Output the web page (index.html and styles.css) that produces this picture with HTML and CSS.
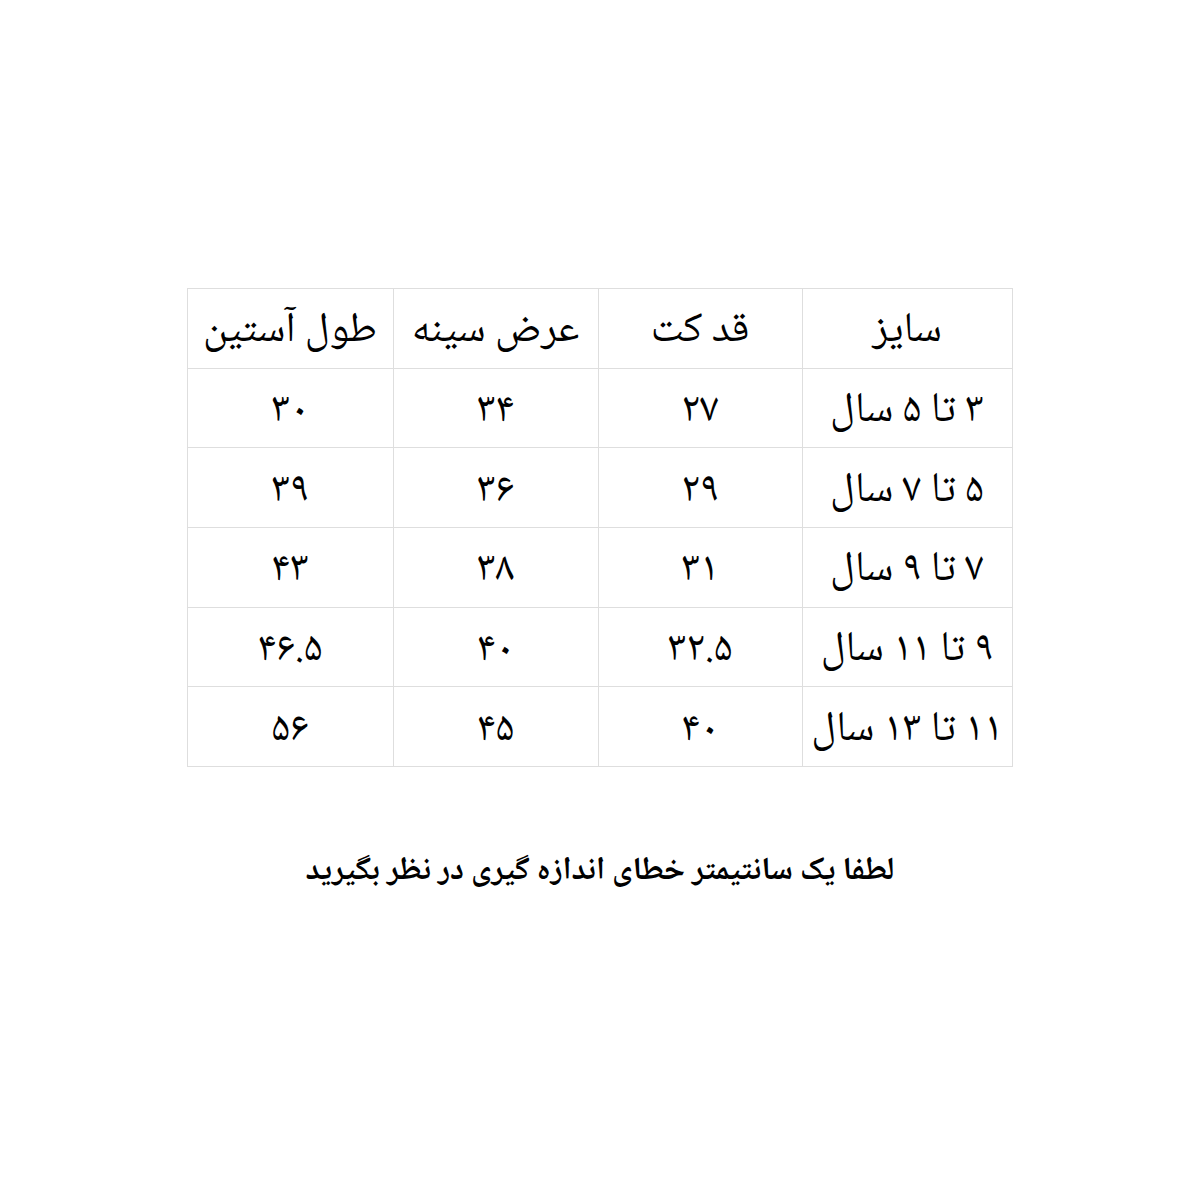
FILE: index.html
```html
<!DOCTYPE html>
<html lang="fa" dir="rtl">
<head>
<meta charset="utf-8">
<title>جدول سایز</title>
<link rel="stylesheet" href="styles.css">
</head>
<body>
<main class="page">
  <table class="sizes">
    <colgroup>
      <col class="col-size">
      <col class="col-len">
      <col class="col-chest">
      <col class="col-sleeve">
    </colgroup>
    <tr><td>سایز</td><td>قد کت</td><td>عرض سینه</td><td>طول آستین</td></tr>
    <tr><td>۳ تا ۵ سال</td><td>۲۷</td><td>۳۴</td><td>۳۰</td></tr>
    <tr><td>۵ تا ۷ سال</td><td>۲۹</td><td>۳۶</td><td>۳۹</td></tr>
    <tr><td>۷ تا ۹ سال</td><td>۳۱</td><td>۳۸</td><td>۴۳</td></tr>
    <tr><td>۹ تا ۱۱ سال</td><td>۳۲.۵</td><td>۴۰</td><td>۴۶.۵</td></tr>
    <tr><td>۱۱ تا ۱۳ سال</td><td>۴۰</td><td>۴۵</td><td>۵۶</td></tr>
  </table>
  <p class="note">لطفا یک سانتیمتر خطای اندازه گیری در نظر بگیرید</p>
</main>
</body>
</html>
```
FILE: styles.css
```css
html, body {
  margin: 0;
  padding: 0;
  background: #ffffff;
}
.page {
  width: 1200px;
  height: 1200px;
  display: flex;
  flex-direction: column;
  align-items: center;
  padding-top: 288px;
  box-sizing: border-box;
  font-family: "Noto Naskh Arabic", "Noto Sans Arabic", "DejaVu Sans", sans-serif;
  color: #000;
}
.sizes {
  border-collapse: collapse;
  direction: rtl;
  table-layout: fixed;
  width: 825px;
  margin-left: -1px;
}
.col-size { width: 210px; }
.col-len { width: 204px; }
.col-chest { width: 205px; }
.col-sleeve { width: 206px; }
.sizes td {
  height: 79.7px;
  padding: 8px 0 0 0;
  box-sizing: border-box;
  border: 1px solid #dedede;
  text-align: center;
  vertical-align: middle;
  font-size: 42px;
  line-height: 1;
  white-space: nowrap;
}
.note {
  margin: 78px 0 0 0;
  font-size: 32px;
  font-weight: bold;
  direction: rtl;
}
```
